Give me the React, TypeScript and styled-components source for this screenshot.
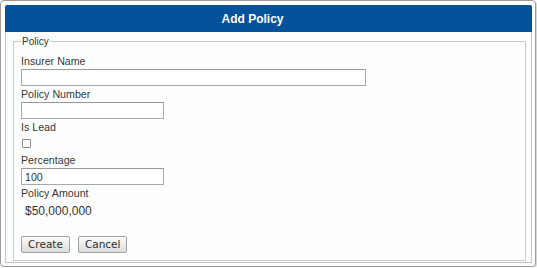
import React from "react";
import styled, { createGlobalStyle } from "styled-components";

const GlobalStyle = createGlobalStyle`
  body {
    margin: 0;
    background: #fff;
    font-family: "Liberation Sans", Arial, sans-serif;
  }
`;

const Dialog = styled.div`
  width: 536px;
  box-sizing: border-box;
  border: 1px solid #9c9c9c;
  border-radius: 4px;
  padding: 4px 3px 3px 4px;
  background: #fff;
  box-shadow: 1px 1px 0 #d8d8d8;
`;

const TitleBar = styled.div`
  height: 27px;
  display: flex;
  align-items: center;
  justify-content: center;
  padding-right: 32px;
  background: #05529a;
  border-radius: 2px 2px 0 0;
  color: #fff;
  font-size: 12px;
  font-weight: bold;
`;

const Body = styled.div`
  border: 1px solid #c4c4c4;
  border-top: none;
  padding: 3px 5px 1px 7px;
  background: #fdfefe;
`;

const Fieldset = styled.fieldset`
  margin: 0;
  padding: 5px 6px 7px 7px;
  border: 1px solid #cacaca;
`;

const Legend = styled.legend`
  padding: 0 1px;
  font-size: 10px;
  line-height: 13px;
  color: #333;
`;

const Label = styled.label`
  display: block;
  font-size: 10.67px;
  line-height: 16px;
  color: #383838;
`;

const TextInput = styled.input<{ $wide?: boolean }>`
  display: block;
  box-sizing: border-box;
  width: ${(p) => (p.$wide ? "345px" : "143px")};
  height: 17px;
  margin: 0;
  padding: 0 3px;
  border: 1px solid #a9a9a9;
  border-top-color: #999;
  background: #fff;
  font-family: "Liberation Sans", Arial, sans-serif;
  font-size: 10.67px;
  color: #333;
  outline: none;
`;

const CheckRow = styled.div`
  height: 17px;
  display: flex;
  align-items: center;
`;

const Check = styled.input`
  appearance: none;
  width: 9px;
  height: 9px;
  margin: 0 0 0 1px;
  border: 1px solid #8a8a8a;
  border-radius: 1px;
  background: #fff;
`;

const Amount = styled.div`
  padding: 2px 0 0 4px;
  font-size: 12px;
  line-height: 16px;
  color: #333;
`;

const Actions = styled.div`
  display: flex;
  gap: 8px;
  margin-top: 17px;
`;

const Button = styled.button`
  height: 17px;
  padding: 0 6px;
  border: 1px solid #a3a3a3;
  border-radius: 2px;
  background: linear-gradient(#fbfbfb, #dcdcdc);
  font-family: "DejaVu Sans", sans-serif;
  font-size: 10.5px;
  line-height: 15px;
  color: #2e2e2e;
`;

export default function App() {
  return (
    <>
      <GlobalStyle />
      <Dialog>
        <TitleBar>Add Policy</TitleBar>
        <Body>
          <Fieldset>
            <Legend>Policy</Legend>
            <Label>Insurer Name</Label>
            <TextInput $wide />
            <Label>Policy Number</Label>
            <TextInput />
            <Label>Is Lead</Label>
            <CheckRow>
              <Check type="checkbox" />
            </CheckRow>
            <Label>Percentage</Label>
            <TextInput defaultValue="100" />
            <Label>Policy Amount</Label>
            <Amount>$50,000,000</Amount>
            <Actions>
              <Button>Create</Button>
              <Button>Cancel</Button>
            </Actions>
          </Fieldset>
        </Body>
      </Dialog>
    </>
  );
}
